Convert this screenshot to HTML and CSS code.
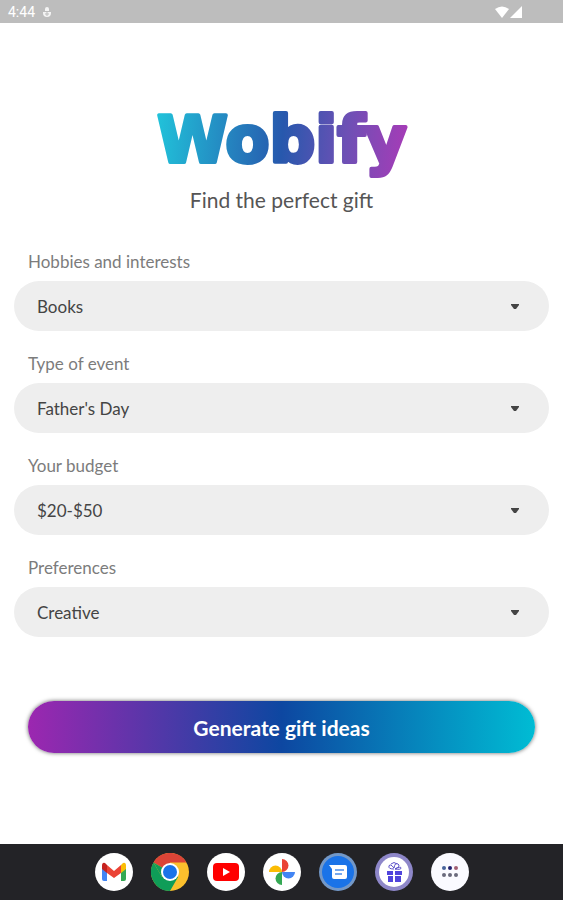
FILE: index.html
```html
<!DOCTYPE html>
<html lang="en">

<head>
    <meta charset="utf-8">
    <meta name="viewport" content="width=device-width, initial-scale=1">
    <title>Wobify</title>
    <link rel="stylesheet" href="styles.css">
</head>

<body>
    <header class="statusbar">
        <span class="time">4:44</span>
        <svg class="status-debug" viewBox="0 0 10 12" width="10" height="12">
            <path d="M3 3a2 2 0 0 1 4 0v2H3zM1 6h8v1a4 4 0 0 1-8 0z" fill="#f4f4f4"/>
            <path d="M3 8h4M5 6v4" stroke="#bdbdbd"/>
        </svg>
        <svg class="status-signal" viewBox="0 0 28 12" width="28" height="12">
            <path d="M0 3Q7-2 14 3L7 12z" fill="#fff"/>
            <path d="M27 0v12H15z" fill="#fff"/>
        </svg>
    </header>

    <main class="content">
        <h1 class="logo">
            <svg viewBox="0 0 280 96" width="280" height="96">
                <defs>
                    <linearGradient id="logoFill" gradientUnits="userSpaceOnUse" x1="13" y1="40" x2="267" y2="60">
                        <stop offset="0" stop-color="#21c3da"/>
                        <stop offset="0.5" stop-color="#2758ad"/>
                        <stop offset="0.75" stop-color="#6d50b5"/>
                        <stop offset="1" stop-color="#a83bb7"/>
                    </linearGradient>
                </defs>
                <text class="logo-text" x="140" y="70" text-anchor="middle">Wobify</text>
            </svg>
        </h1>
        <p class="slogan">Find the perfect gift</p>

        <form class="gift-form">
            <div class="field">
                <label for="hobbies">Hobbies and interests</label>
                <div class="select-box">
                    <select id="hobbies" name="hobbies"><option>Books</option></select>
                    <svg class="arrow" viewBox="0 0 8 5" width="8" height="5"><path d="M0 0h8v1L5 5H3L0 1z"/></svg>
                </div>
            </div>
            <div class="field">
                <label for="event">Type of event</label>
                <div class="select-box">
                    <select id="event" name="event"><option>Father's Day</option></select>
                    <svg class="arrow" viewBox="0 0 8 5" width="8" height="5"><path d="M0 0h8v1L5 5H3L0 1z"/></svg>
                </div>
            </div>
            <div class="field">
                <label for="budget">Your budget</label>
                <div class="select-box">
                    <select id="budget" name="budget"><option>$20-$50</option></select>
                    <svg class="arrow" viewBox="0 0 8 5" width="8" height="5"><path d="M0 0h8v1L5 5H3L0 1z"/></svg>
                </div>
            </div>
            <div class="field">
                <label for="preferences">Preferences</label>
                <div class="select-box">
                    <select id="preferences" name="preferences"><option>Creative</option></select>
                    <svg class="arrow" viewBox="0 0 8 5" width="8" height="5"><path d="M0 0h8v1L5 5H3L0 1z"/></svg>
                </div>
            </div>
            <button type="button" class="generate">Generate gift ideas</button>
        </form>
    </main>

    <nav class="dock">
        <button type="button" class="app" aria-label="Gmail">
            <svg viewBox="0 0 38 38">
                <circle cx="19" cy="19" r="19" fill="#fff"/>
                <path d="M7 13v13q0 2 2 2h3V16z" fill="#4285f4"/>
                <path d="M31 13v13q0 2-2 2h-3V16z" fill="#34a853"/>
                <path d="M26 12l2-2q3-1 3 3v3l-5 4z" fill="#fbbc04"/>
                <path d="M12 12l7 6 7-6v8l-7 5-7-5z" fill="#ea4335"/>
                <path d="M12 12l-2-2q-3-1-3 3v3l5 4z" fill="#c5221f"/>
            </svg>
        </button>
        <button type="button" class="app" aria-label="Chrome">
            <svg viewBox="0 0 38 38">
                <circle cx="19" cy="19" r="19" fill="#fbc02d"/>
                <path d="M19 19L2.5 9.500A19 19 0 0 1 35.500 9.500H19z" fill="#db4437"/>
                <path d="M2.500 9.500A19 19 0 0 0 19 38L27.200 23.700H10.800z" fill="#0f9d58"/>
                <path d="M10.800 23.700L2.500 9.500 19 19z" fill="#0f9d58"/>
                <circle cx="19" cy="19" r="9" fill="#fff"/>
                <circle cx="19" cy="19" r="7" fill="#1a73e8"/>
            </svg>
        </button>
        <button type="button" class="app" aria-label="YouTube">
            <svg viewBox="0 0 38 38">
                <circle cx="19" cy="19" r="19" fill="#fff"/>
                <rect x="6" y="10" width="26" height="18" rx="4" fill="#f00"/>
                <path d="M16 15l7 4-7 4z" fill="#fff"/>
            </svg>
        </button>
        <button type="button" class="app" aria-label="Photos">
            <svg viewBox="0 0 38 38">
                <circle cx="19" cy="19" r="19" fill="#fff"/>
                <path d="M19 6a6.500 6.500 0 0 1 0 13z" fill="#ea4335"/>
                <path d="M32 19a6.500 6.500 0 0 1-13 0z" fill="#4285f4"/>
                <path d="M19 32a6.500 6.500 0 0 1 0-13z" fill="#34a853"/>
                <path d="M6 19a6.500 6.500 0 0 1 13 0z" fill="#fbbc04"/>
            </svg>
        </button>
        <button type="button" class="app" aria-label="Messages">
            <svg viewBox="0 0 38 38">
                <circle cx="19" cy="19" r="19" fill="#7398c8"/>
                <circle cx="19" cy="19" r="16" fill="#1a73e8"/>
                <path d="M10 12h16q2 0 2 2v10q0 2-2 2H15q-2 0-2-2v-8z" fill="#fff"/>
                <path d="M16 17h9M16 21h7" stroke="#76a9ef" stroke-width="2"/>
            </svg>
        </button>
        <button type="button" class="app" aria-label="Wobify">
            <svg viewBox="0 0 38 38">
                <circle cx="19" cy="19" r="19" fill="#8e87c9"/>
                <circle cx="19" cy="19" r="15" fill="#fff"/>
                <path d="M12 18h6v4h-6zM20 18h7v4h-7zM13 23h5v6h-5zM20 23h6v6h-6z" fill="#5044dc"/>
                <path d="M19 16q-6 0-5-3t5 2q1-6 4-4t-3 5q6-3 6-1t-6 1M16 11q3-3 6 0" fill="none" stroke="#5b50c9"/>
            </svg>
        </button>
        <button type="button" class="app" aria-label="All apps">
            <svg viewBox="0 0 38 38">
                <circle cx="19" cy="19" r="19" fill="#fafaff"/>
                <g fill="#6a6a7c">
                    <circle cx="13" cy="15" r="2" fill="#46639b"/>
                    <circle cx="19" cy="15" r="2" fill="#20206f"/>
                    <circle cx="25" cy="15" r="2" fill="#a25f73"/>
                    <circle cx="13" cy="22" r="2"/>
                    <circle cx="19" cy="22" r="2"/>
                    <circle cx="25" cy="22" r="2"/>
                </g>
            </svg>
        </button>
    </nav>
</body>

</html>
```
FILE: styles.css
```css
* {
    box-sizing: border-box;
}

body {
    margin: 0;
    min-height: 100vh;
    display: flex;
    flex-direction: column;
    background-color: #fff;
    color: #555;
    font-family: Lato, "Open Sans", sans-serif;
}

.statusbar {
    display: flex;
    align-items: center;
    height: 23px;
    padding: 0 40px 0 8px;
    background-color: #bdbdbd;
}

.time {
    color: #fff;
    font: 14px Roboto, sans-serif;
}

.status-debug {
    margin-left: 7px;
}

.status-signal {
    margin-left: auto;
}

.content {
    padding: 69px 14px 32px;
}

.logo {
    margin: 0;
}

.logo svg {
    display: block;
    margin: 0 auto;
}

.logo-text {
    font: bold 64px "DejaVu Sans", sans-serif;
    fill: url(#logoFill);
    stroke: url(#logoFill);
    stroke-width: 4px;
    stroke-linejoin: round;
}

.slogan {
    margin: 0 0 38px;
    font-size: 21px;
    line-height: 24px;
    text-align: center;
}

.field {
    margin-bottom: 21px;
}

.field label {
    display: block;
    margin: 0 14px 7px;
    font-size: 17px;
    line-height: 24px;
    color: #7c7c7c;
}

.select-box {
    position: relative;
}

.select-box select {
    display: block;
    width: 100%;
    height: 50px;
    padding: 0 48px 0 23px;
    border: 0;
    border-radius: 25px;
    background-color: #eee;
    color: #444;
    font-family: inherit;
    font-size: 17px;
    appearance: none;
}

.arrow {
    position: absolute;
    right: 30px;
    top: 23px;
    fill: #444;
    pointer-events: none;
}

.generate {
    display: block;
    width: calc(100% - 28px);
    height: 52px;
    margin: 64px auto 0;
    border: 0;
    border-radius: 26px;
    background: linear-gradient(to right, #9c27b0, #0d47a1 50%, #00bcd4);
    box-shadow: 0 0 4px rgba(0, 0, 0, 0.6);
    color: #fff;
    font-family: inherit;
    font-size: 21px;
    font-weight: bold;
}

.dock {
    display: flex;
    justify-content: center;
    align-items: center;
    gap: 18px;
    height: 56px;
    margin-top: auto;
    background-color: #232327;
}

.app {
    width: 38px;
    height: 38px;
    padding: 0;
    border: 0;
    border-radius: 50%;
    background: none;
}

.app svg {
    display: block;
    width: 100%;
    height: 100%;
}
```
